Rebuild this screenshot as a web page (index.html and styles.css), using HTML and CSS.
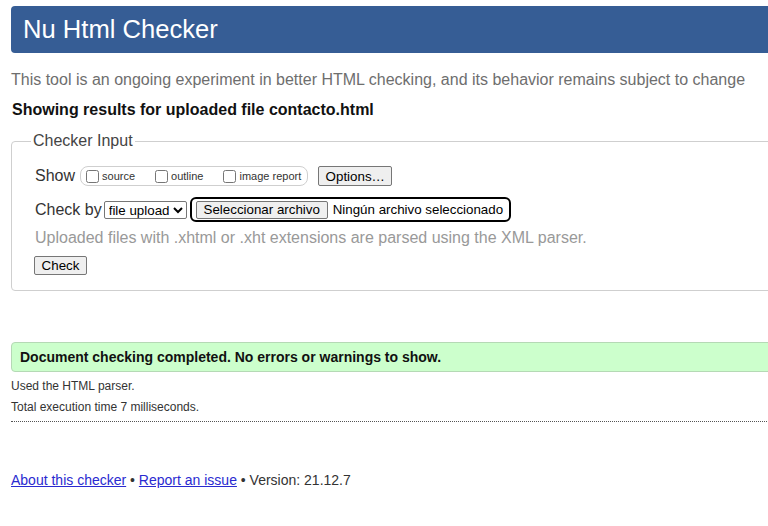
FILE: index.html
```html
<!DOCTYPE html>
<html lang="en">
<head>
<meta charset="utf-8">
<title>Nu Html Checker</title>
<link rel="stylesheet" href="styles.css">
</head>
<body>
<div class="page">
  <header class="banner"><h1 class="title">Nu Html Checker</h1></header>
  <p class="lede">This tool is an ongoing experiment in better HTML checking, and its behavior remains subject to change</p>
  <p class="showing">Showing results for uploaded file contacto.html</p>

  <fieldset class="input-box">
    <legend class="legend">Checker Input</legend>
    <div class="row show-row">
      <span class="row-label">Show</span>
      <span class="opts">
        <label class="opt"><input type="checkbox" class="cb">source</label>
        <label class="opt"><input type="checkbox" class="cb">outline</label>
        <label class="opt"><input type="checkbox" class="cb">image report</label>
      </span>
      <button class="btn btn-options" type="button">Options…</button>
    </div>
    <div class="row by-row">
      <span class="row-label">Check by</span>
      <select class="sel"><option>file upload</option></select>
      <span class="file-wrap">
        <button class="btn btn-file" type="button">Seleccionar archivo</button>
        <span class="file-name">Ningún archivo seleccionado</span>
      </span>
    </div>
    <p class="hint">Uploaded files with .xhtml or .xht extensions are parsed using the XML parser.</p>
    <div class="check-row"><button class="btn btn-check" type="submit">Check</button></div>
  </fieldset>

  <div class="success">Document checking completed. No errors or warnings to show.</div>
  <p class="meta">Used the HTML parser.</p>
  <p class="meta meta-2">Total execution time 7 milliseconds.</p>
  <hr class="dots">

  <p class="footer"><a href="#" class="link">About this checker</a> • <a href="#" class="link">Report an issue</a> • Version: 21.12.7</p>
</div>
</body>
</html>
```

FILE: styles.css
```css
html, body {
  margin: 0;
  padding: 0;
  overflow: hidden;
  background: #fff;
}
body {
  font-family: "Liberation Sans", Arial, sans-serif;
  color: #333;
}
.page {
  width: 1100px;
  padding: 6px 0 0 11px;
}
.banner {
  height: 47px;
  background: #365d95;
  border-radius: 4px;
  padding-left: 12px;
}
.title {
  margin: 0;
  font-size: 25.6px;
  font-weight: normal;
  line-height: 47px;
  color: #fff;
}
.lede {
  margin: 18px 0 0;
  font-size: 16px;
  line-height: 18px;
  color: #6e6e6e;
}
.showing {
  margin: 12px 0 0 1px;
  font-size: 16px;
  line-height: 18px;
  font-weight: bold;
  color: #111;
}
.input-box {
  margin: 13px 0 0;
  border: 1px solid #cfcfcf;
  border-radius: 4px;
  padding: 16px 0 15px 23px;
  min-width: 0;
}
.legend {
  margin-left: -4px;
  padding: 0 2px;
  font-size: 16px;
  line-height: 18px;
  color: #444;
}
.row {
  display: flex;
  align-items: center;
}
.show-row { height: 20px; }
.row-label {
  font-size: 16px;
  line-height: 18px;
  color: #333;
}
.opts {
  display: flex;
  align-items: center;
  gap: 20px;
  height: 18px;
  margin-left: 5px;
  padding: 0 6px 0 5px;
  border: 1px solid #cfcfcf;
  border-radius: 8px;
}
.opt {
  display: flex;
  align-items: center;
  font-size: 11px;
  color: #333;
}
.cb {
  width: 13px;
  height: 13px;
  margin: 0 3px 0 0;
}
.btn {
  font-family: "Liberation Sans", Arial, sans-serif;
  font-size: 13.33px;
  color: #000;
  background: #efefef;
  border: 1px solid #767676;
  border-radius: 2px;
  padding: 0 6px;
  margin: 0;
}
.btn-options {
  height: 20px;
  width: 74px;
  margin-left: 10px;
}
.by-row {
  height: 25px;
  margin-top: 11px;
}
.sel {
  margin-left: 2px;
  height: 18px;
  width: 83px;
  font-family: "Liberation Sans", Arial, sans-serif;
  font-size: 13.33px;
  color: #000;
  background: #fff;
  border: 1px solid #767676;
  border-radius: 2px;
  padding: 0;
}
.file-wrap {
  display: flex;
  align-items: center;
  height: 21px;
  margin-left: 3px;
  padding: 0 6px 0 4px;
  border: 2px solid #000;
  border-radius: 6px;
}
.btn-file {
  height: 18px;
  width: 132px;
}
.file-name {
  margin-left: 5px;
  font-size: 13.33px;
  color: #000;
}
.hint {
  margin: 7px 0 0;
  font-size: 16px;
  line-height: 18px;
  color: #999;
}
.check-row {
  margin-top: 9px;
  display: flex;
}
.btn-check {
  height: 19px;
  width: 53px;
  margin-left: -1px;
}
.success {
  margin-top: 51px;
  height: 28px;
  line-height: 28px;
  border: 1px solid #b5d9b5;
  border-radius: 4px;
  background: #ccffcc;
  padding-left: 8px;
  font-size: 14px;
  font-weight: bold;
  color: #111;
}
.meta {
  margin: 6px 0 0;
  font-size: 12px;
  line-height: 16px;
  color: #333;
}
.meta-2 {
  margin-top: 5px;
}
.dots {
  margin: 6px 0 0;
  border: 0;
  border-top: 1px dotted #555;
  height: 0;
}
.footer {
  margin: 50px 0 0;
  font-size: 14px;
  line-height: 16px;
  color: #333;
}
.link {
  color: #2a2ad0;
  text-decoration: underline;
}
```
